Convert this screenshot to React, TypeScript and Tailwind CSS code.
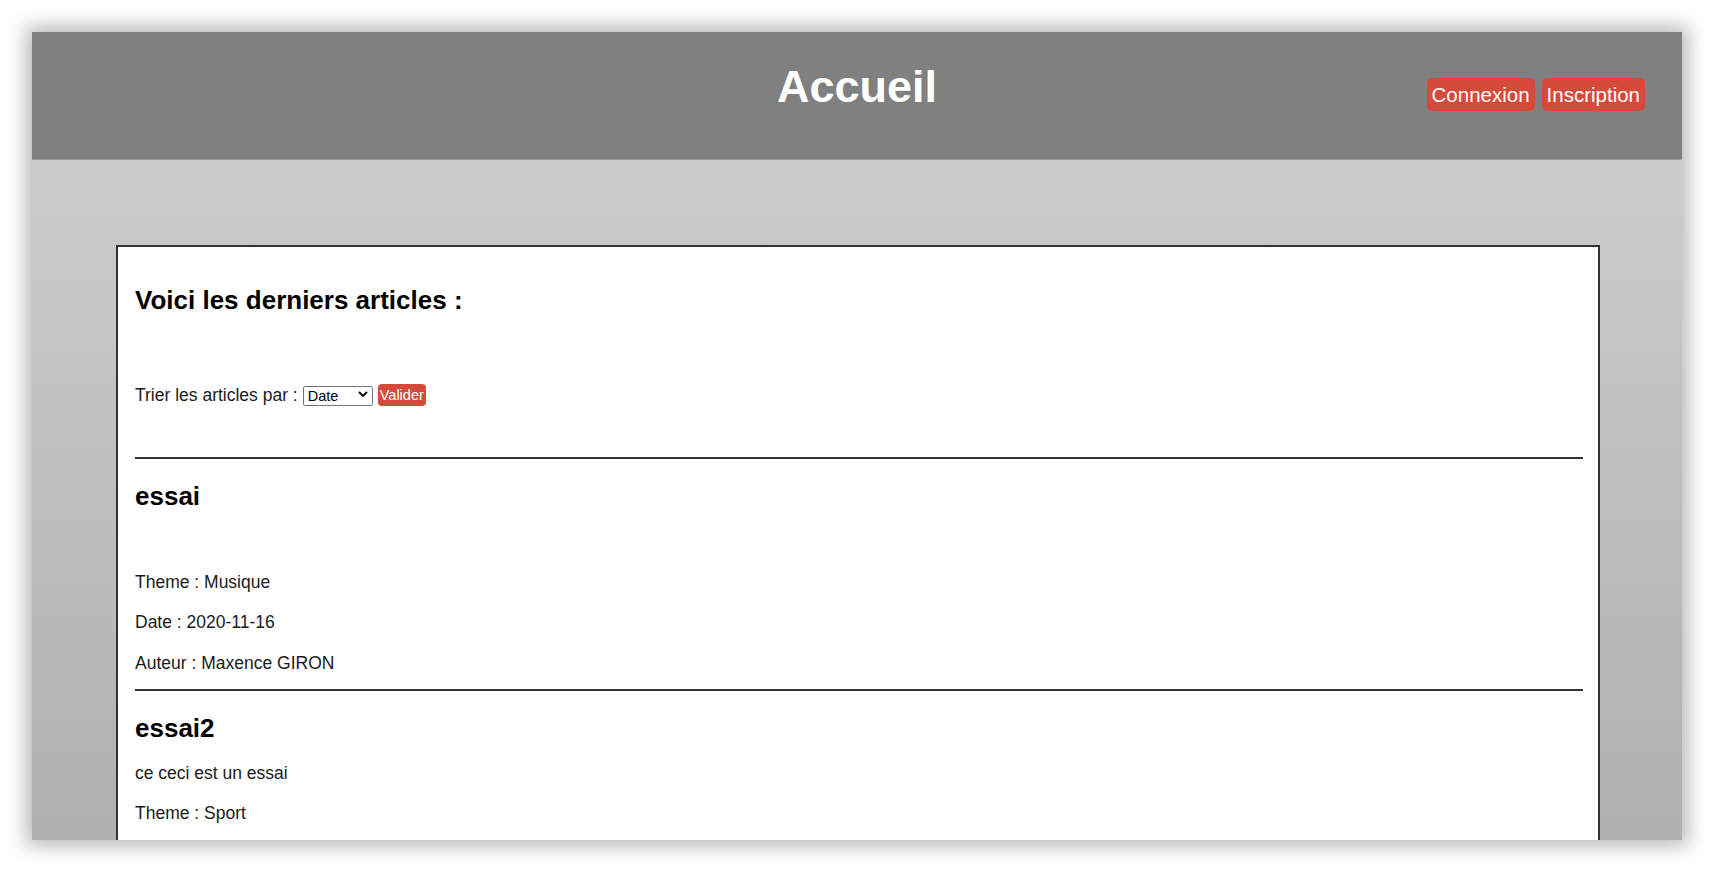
// Accueil — page d'accueil du blog : en-tête, tri et liste des derniers articles.

type Article = {
  titre: string
  contenu: string
  theme: string
  date?: string
  auteur?: string
}

const ARTICLES: Article[] = [
  { titre: "essai", contenu: "", theme: "Musique", date: "2020-11-16", auteur: "Maxence GIRON" },
  { titre: "essai2", contenu: "ce ceci est un essai", theme: "Sport" },
]

const FONT = { fontFamily: '"Liberation Sans", Arial, sans-serif' }

function ArticleItem({ a }: { a: Article }) {
  return (
    <div>
      <hr className="border-0 h-[2px] bg-[#333]" />
      <h2 className="mt-[22px] text-[26px] leading-[30px] font-bold text-black">{a.titre}</h2>
      <div className="mt-[20px] flex flex-col gap-[19.5px] pb-[15px] text-[17.5px] leading-[21px] text-[#1a1a1a]">
        {/* contenu vide → ligne blanche */}
        <p className="h-[21px]">{a.contenu}</p>
        <p>Theme : {a.theme}</p>
        {a.date && <p>Date : {a.date}</p>}
        {a.auteur && <p>Auteur : {a.auteur}</p>}
      </div>
    </div>
  )
}

export default function App() {
  return (
    <div className="w-full h-[872px] bg-white p-[32px] overflow-hidden" style={FONT}>
      <div className="h-[808px] flex flex-col overflow-hidden shadow-[0_0_18px_6px_rgba(0,0,0,0.28)]">

        {/* ── EN-TÊTE ── */}
        <header className="h-[128px] shrink-0 bg-[#808080] border-b border-[#999] grid grid-cols-[1fr_auto_1fr]">
          <div />
          <h1 className="pt-[29px] text-[45px] leading-[52px] font-bold text-white">Accueil</h1>
          <div className="flex justify-end items-start gap-[7px] pt-[46px] pr-[37px]">
            <button className="h-[33px] px-[5px] rounded-[5px] bg-[#d64a3b] text-white text-[20.5px] leading-[24px]">
              Connexion
            </button>
            <button className="h-[33px] px-[5px] rounded-[5px] bg-[#d64a3b] text-white text-[20.5px] leading-[24px]">
              Inscription
            </button>
          </div>
        </header>

        {/* ── CONTENU ── (la page continue sous le bas de la fenêtre) */}
        <div className="flex-1 min-h-0 overflow-hidden bg-gradient-to-b from-[#cccccc] to-[#b0b0b0] pl-[84px] pr-[82px] pt-[85px]">
          <main className="min-h-[700px] border-2 border-[#333] bg-white pl-[17px] pr-[15px] pt-[38px]">
            <h2 className="text-[26px] leading-[30px] font-bold text-black">Voici les derniers articles :</h2>

            {/* Tri */}
            <form className="mt-[69px] h-[22px] flex items-center text-[17.5px] leading-[20px] text-[#1a1a1a]">
              <span>Trier les articles par :</span>
              <div className="relative ml-[5px] w-[70px] h-[20px]">
                <select className="appearance-none w-full h-full border border-[#767676] rounded-[2px] bg-white pl-[4px] text-[14.5px] leading-[18px] text-black">
                  <option>Date</option>
                  <option>Theme</option>
                  <option>Auteur</option>
                </select>
                <svg className="absolute right-[5px] top-[6px] pointer-events-none" width="10" height="7" viewBox="0 0 10 7">
                  <path d="M1 1l4 4 4-4" fill="none" stroke="#000" strokeWidth="1.8" />
                </svg>
              </div>
              <button type="button" className="ml-[5px] h-[22px] px-[2px] rounded-[4px] bg-[#d64a3b] text-white text-[14.5px] leading-[18px]">
                Valider
              </button>
            </form>

            <div className="mt-[51px]">
              {ARTICLES.map((a) => (
                <ArticleItem key={a.titre} a={a} />
              ))}
            </div>
          </main>
        </div>
      </div>
    </div>
  )
}
